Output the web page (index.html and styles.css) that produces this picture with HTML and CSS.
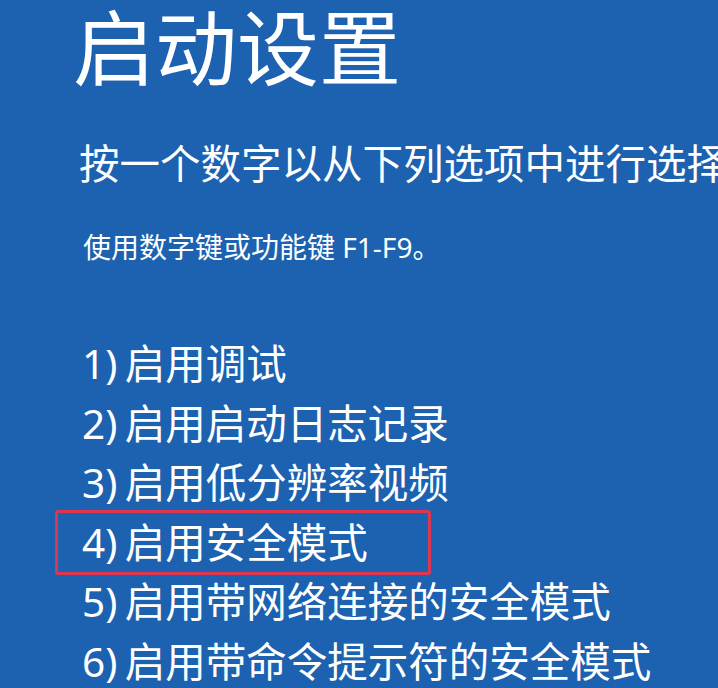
FILE: index.html
```html
<!DOCTYPE html>
<html lang="zh-CN">
<head>
<meta charset="utf-8">
<title>启动设置</title>
<link rel="stylesheet" href="styles.css">
</head>
<body>
<main class="screen">
  <h1 class="title">启动设置</h1>
  <p class="subtitle">按一个数字以从下列选项中进行选择</p>
  <p class="hint">使用数字键或功能键 F1-F9。</p>
  <ol class="options">
    <li class="option">1) 启用调试</li>
    <li class="option">2) 启用启动日志记录</li>
    <li class="option">3) 启用低分辨率视频</li>
    <li class="option selected">4) 启用安全模式</li>
    <li class="option">5) 启用带网络连接的安全模式</li>
    <li class="option">6) 启用带命令提示符的安全模式</li>
  </ol>
</main>
</body>
</html>
```

FILE: styles.css
```css
html, body {
  margin: 0;
  padding: 0;
}

body {
  width: 718px;
  height: 688px;
  overflow: hidden;
  background: #1c62b0;
  color: #ffffff;
  font-family: "Noto Sans", "Noto Sans CJK SC", sans-serif;
}

.screen {
  display: flex;
  flex-direction: column;
  padding-left: 73px;
}

.title {
  margin: 0;
  font-size: 82px;
  font-weight: 400;
  line-height: 94px;
  white-space: nowrap;
}

.subtitle {
  margin: 42px 0 0 6px;
  font-size: 40.5px;
  line-height: 56px;
  white-space: nowrap;
}

.hint {
  margin: 35px 0 0 10px;
  font-size: 28px;
  line-height: 40px;
  white-space: nowrap;
}

.options {
  list-style: none;
  margin: 67px 0 0 0;
  padding: 0 0 0 9px;
  display: flex;
  flex-direction: column;
}

.option {
  font-size: 40.5px;
  line-height: 59.5px;
  word-spacing: -3px;
  white-space: nowrap;
}

.option.selected {
  box-sizing: border-box;
  width: 376px;
  margin: -3px 0 -3px -27px;
  padding-left: 24px;
  border: 3px solid #db3752;
  border-radius: 3px;
}
```
